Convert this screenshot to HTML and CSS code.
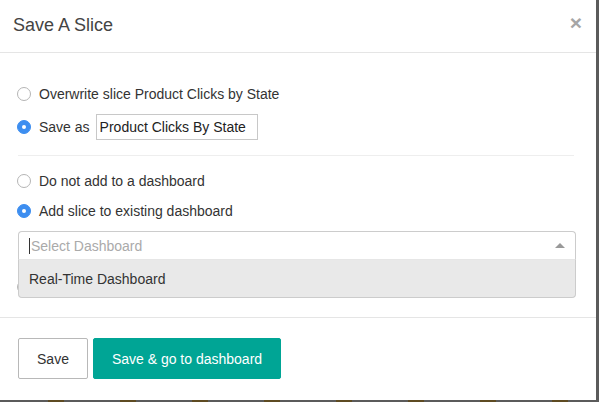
FILE: index.html
```html
<!DOCTYPE html>
<html>
<head>
<meta charset="utf-8">
<link rel="stylesheet" href="styles.css">
</head>
<body>
<div class="modal">
  <div class="modal-header">
    <h4 class="modal-title">Save A Slice</h4>
    <button class="close" type="button">×</button>
  </div>
  <div class="modal-body">
    <div class="radio-row"><span class="radio"></span><span>Overwrite slice Product Clicks by State</span></div>
    <div class="radio-row save-as"><span class="radio checked"></span><span>Save as</span><span class="text-input">Product Clicks By State</span></div>
    <hr class="divider">
    <div class="radio-row"><span class="radio"></span><span>Do not add to a dashboard</span></div>
    <div class="radio-row"><span class="radio checked"></span><span>Add slice to existing dashboard</span></div>
    <div class="select">
      <div class="select-control">
        <span class="caret-line"></span><span class="placeholder">Select Dashboard</span>
        <span class="arrow-up"></span>
      </div>
      <div class="select-menu">
        <div class="option">Real-Time Dashboard</div>
      </div>
    </div>
    <div class="radio-row hidden-row"><span class="radio"></span><span class="hidden-label">Add to new dashboard</span></div>
  </div>
  <div class="modal-footer">
    <button class="btn btn-default" type="button">Save</button>
    <button class="btn btn-primary" type="button">Save &amp; go to dashboard</button>
  </div>
</div>
</body>
</html>
```
FILE: styles.css
```css
html, body {
  margin: 0;
  padding: 0;
}
body {
  width: 599px;
  height: 402px;
  overflow: hidden;
  background-color: #5b5b5b;
  background-image: repeating-linear-gradient(to right, transparent 0 48px, #5e4b22 48px 64px, transparent 64px 72px);
  font-family: "Liberation Sans", Arial, sans-serif;
  color: #333;
}
.modal {
  width: 596px;
  height: 400px;
  background: #fff;
  display: flex;
  flex-direction: column;
}
.modal-header {
  height: 53px;
  border-bottom: 1px solid #e5e5e5;
  display: flex;
  align-items: center;
  justify-content: space-between;
  padding: 0 14px 0 13px;
  box-sizing: border-box;
  flex: none;
}
.modal-title {
  margin: 0;
  font-size: 18px;
  font-weight: normal;
  color: #444;
  padding-bottom: 2px;
}
.close {
  border: 0;
  background: none;
  padding: 0;
  font-family: "Liberation Sans", Arial, sans-serif;
  font-size: 21px;
  font-weight: bold;
  color: #a6a6a6;
  line-height: 1;
  margin-bottom: 8px;
}
.modal-body {
  padding: 31px 20px 20px 17px;
  display: flex;
  flex-direction: column;
  position: relative;
  flex: none;
}
.modal-body > * {
  flex-shrink: 0;
}
.radio-row {
  height: 20px;
  display: flex;
  align-items: center;
  font-size: 14px;
  color: #333;
  margin-bottom: 10px;
}
.radio {
  width: 12px;
  height: 12px;
  border-radius: 50%;
  border: 1px solid #b5b5b5;
  background: #fff;
  box-sizing: content-box;
  margin-right: 8px;
  flex: none;
  display: flex;
  align-items: center;
  justify-content: center;
}
.radio.checked {
  background: #3d8ef0;
  border-color: #3d8ef0;
}
.radio.checked::after {
  content: "";
  width: 4px;
  height: 4px;
  border-radius: 50%;
  background: #fff;
}
.save-as {
  height: 26px;
  margin-bottom: 0;
}
.text-input {
  margin-left: 6px;
  width: 162px;
  height: 26px;
  box-sizing: border-box;
  border: 1px solid #c8c8c8;
  padding: 0 3px;
  display: flex;
  align-items: center;
  font-size: 14px;
  color: #222;
}
.divider {
  border: 0;
  border-top: 1px solid #eee;
  margin: 15px 2px 15px 1px;
  height: 0;
}
.select {
  position: relative;
  margin-left: 1px;
}
.select-control {
  height: 29px;
  box-sizing: border-box;
  border: 1px solid #ccc;
  border-radius: 4px 4px 0 0;
  border-bottom-color: #e6e6e6;
  display: flex;
  align-items: center;
  padding: 0 10px;
  font-size: 14px;
  background: #fff;
}
.caret-line {
  width: 1px;
  height: 16px;
  background: #333;
  margin-right: 1px;
}
.placeholder {
  color: #aaa;
  flex: 1;
}
.arrow-up {
  width: 0;
  height: 0;
  border-left: 5px solid transparent;
  border-right: 5px solid transparent;
  border-bottom: 5px solid #999;
}
.select-menu {
  position: absolute;
  left: 0;
  right: 0;
  top: 29px;
  z-index: 2;
  background: #e9e9e9;
  border: 1px solid #ccc;
  border-top: 0;
  border-radius: 0 0 4px 4px;
}
.option {
  height: 37px;
  display: flex;
  align-items: center;
  padding: 0 10px;
  font-size: 14px;
  color: #333;
}
.hidden-row {
  margin-top: 17px;
  margin-bottom: 0;
}
.hidden-label {
  visibility: hidden;
}
.modal-footer {
  border-top: 1px solid #e5e5e5;
  padding: 20px 18px;
  display: flex;
  gap: 5px;
  flex: none;
}
.btn {
  height: 41px;
  box-sizing: border-box;
  font-family: "Liberation Sans", Arial, sans-serif;
  font-size: 14px;
  border-radius: 2px;
  padding: 0;
  white-space: nowrap;
  cursor: pointer;
}
.btn-default {
  width: 70px;
  background: #fff;
  border: 1px solid #b8b8b8;
  color: #333;
}
.btn-primary {
  width: 188px;
  background: #00a595;
  border: 1px solid #00a595;
  color: #fff;
}
```
